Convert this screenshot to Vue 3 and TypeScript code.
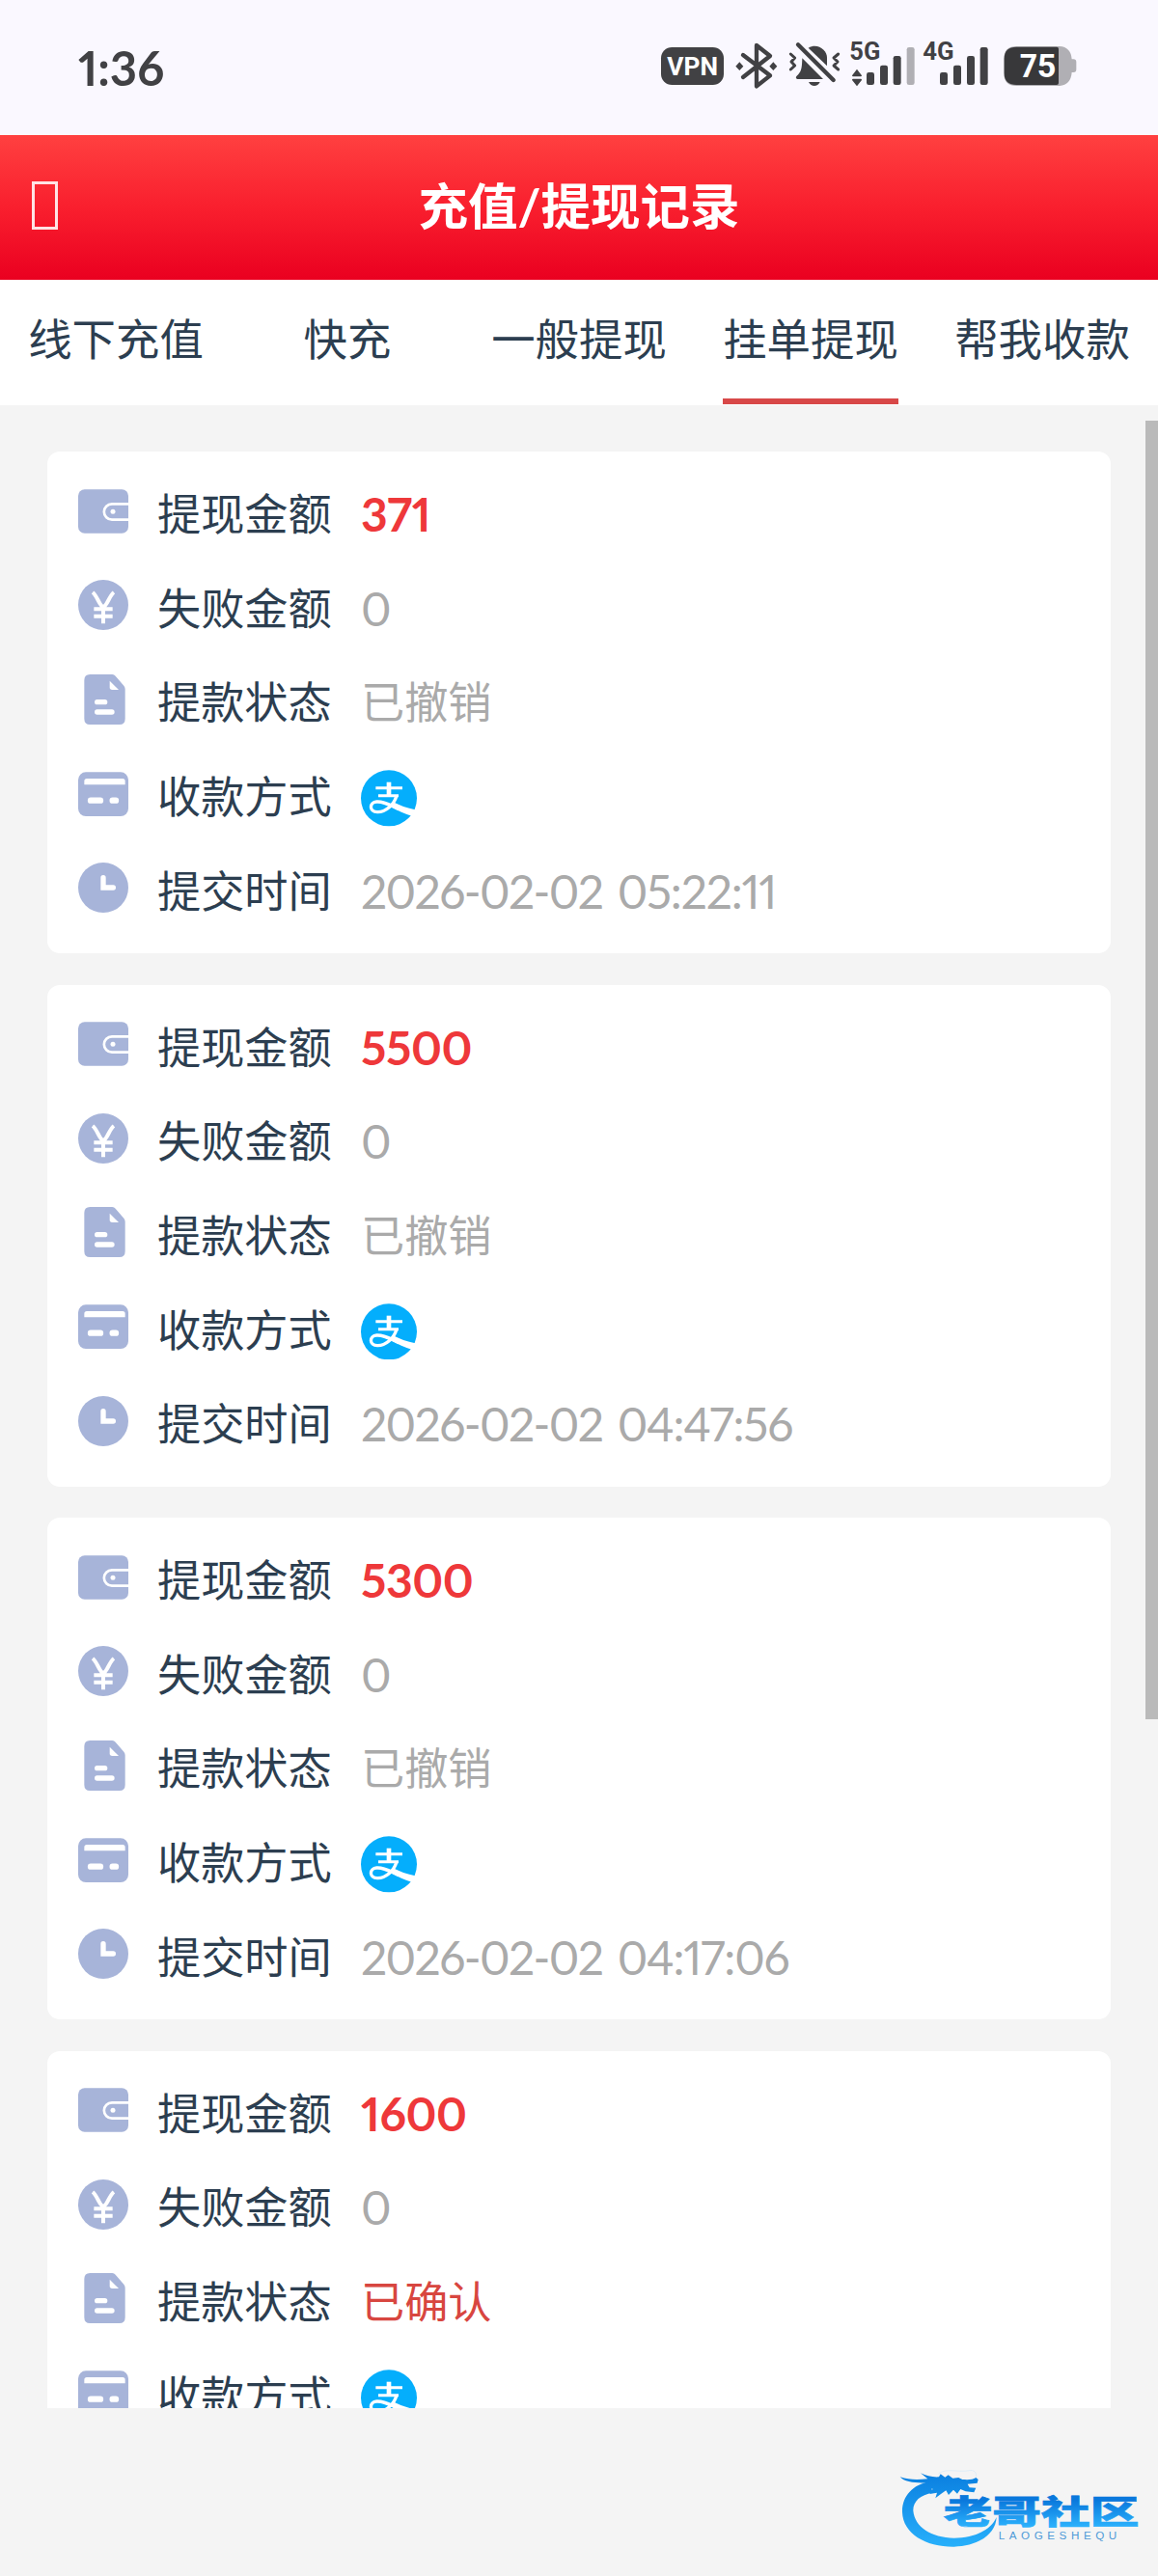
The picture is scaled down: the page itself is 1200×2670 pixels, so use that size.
<script setup lang="ts">
interface WithdrawRecord {
  amount: string
  failed: string
  status: string
  confirmed?: boolean
  date: string
  time: string
}

const tabs: string[] = ['线下充值', '快充', '一般提现', '挂单提现', '帮我收款']
const activeTab = 3

const records: WithdrawRecord[] = [
  { amount: '371', failed: '0', status: '已撤销', date: '2026-02-02', time: '05:22:11' },
  { amount: '5500', failed: '0', status: '已撤销', date: '2026-02-02', time: '04:47:56' },
  { amount: '5300', failed: '0', status: '已撤销', date: '2026-02-02', time: '04:17:06' },
  { amount: '1600', failed: '0', status: '已确认', confirmed: true, date: '', time: '' },
]
</script>

<template>
  <div class="screen">
    <div class="statusbar">
      <span class="clock">1:36</span>
      <svg class="indicators" viewBox="0 0 1440 300" width="480" height="100">
        <g fill="#414144">
          <rect x="75" y="87" width="195" height="117" rx="34" />
          <text x="94" y="174" class="st vpn" textLength="158" lengthAdjust="spacingAndGlyphs">VPN</text>
          <!-- bluetooth -->
          <path d="M330 111 L414 175 L372 208 V81 L414 114 L330 180" fill="none" stroke="#414144" stroke-width="13" stroke-linejoin="round" stroke-linecap="round" />
          <path d="M319 133 l12 13 -12 13 -12 -13z M424 133 l12 13 -12 13 -12 -13z" />
          <!-- muted, vibrating bell -->
          <path d="M533 89 C560 72 591 94 591 119 V145z" />
          <path d="M514 121 L579 186 H499 C490 182 497 176 502 171 C512 160 513 150 514 121z" />
          <path d="M534 195 H569 C562 211 541 211 534 195z" />
          <path d="M501 79 L611 189" fill="none" stroke="#414144" stroke-width="13" stroke-linecap="round" />
          <path d="M478 108 L491 120 L480 132 L491 144 L478 156 M626 108 L612 120 L624 132 L612 144 L626 156" fill="none" stroke="#414144" stroke-width="9" stroke-linejoin="round" stroke-linecap="round" />
          <text x="661" y="126" class="st net" textLength="96" lengthAdjust="spacingAndGlyphs">5G</text>
          <path d="M684 155 L699 175 Q699 178 696 178 H672 Q669 178 669 175z M684 208 L699 189 Q699 185 696 185 H672 Q669 185 669 189z" />
          <rect x="714" y="165" width="24" height="39" rx="7" />
          <rect x="756" y="143" width="24" height="61" rx="7" />
          <rect x="797" y="114" width="24" height="90" rx="7" />
          <rect x="839" y="87" width="24" height="117" rx="7" fill="#b0afb4" />
          <text x="889" y="126" class="st net" textLength="97" lengthAdjust="spacingAndGlyphs">4G</text>
          <rect x="942" y="165" width="24" height="39" rx="7" />
          <rect x="984" y="143" width="24" height="61" rx="7" />
          <rect x="1026" y="114" width="24" height="90" rx="7" />
          <rect x="1067" y="87" width="24" height="117" rx="7" />
          <path d="M1180 84 H1314 Q1349 86 1352 124 H1357 Q1366 124 1366 133 V156 Q1366 165 1357 165 H1352 Q1349 204 1314 207 H1180 Q1141 207 1141 168 V123 Q1141 84 1180 84z" fill="#b0afb4" />
          <path d="M1180 86 H1305 Q1311 86 1311 92 V198 Q1311 204 1305 204 H1180 Q1142 204 1142 168 V123 Q1142 86 1180 86z" fill="#38383a" />
          <text x="1190" y="181" class="st batt" textLength="113" lengthAdjust="spacingAndGlyphs">75</text>
        </g>
      </svg>
    </div>

    <header class="header">
      <span class="back"></span>
      <h1 class="title">充值/提现记录</h1>
    </header>

    <nav class="tabs">
      <div v-for="(tab, i) in tabs" :key="tab" class="tab">
        <span class="tab-label" :class="{ active: i === activeTab }">{{ tab }}</span>
      </div>
    </nav>

    <main class="list">
      <section v-for="(record, n) in records" :key="n" class="card">
        <div class="row">
          <svg class="icon" viewBox="0 0 156 156">
            <rect y="10" width="156" height="136" rx="20" fill="#a7b4d9" />
            <path d="M156 55 H105 A24 24 0 0 0 105 104 H156" fill="none" stroke="#fff" stroke-width="8" />
            <circle cx="108" cy="79" r="7.5" fill="#fff" />
          </svg>
          <span class="label">提现金额</span>
          <span class="value amount">{{ record.amount }}</span>
        </div>
        <div class="row">
          <svg class="icon" viewBox="0 0 156 156">
            <circle cx="78" cy="78" r="78" fill="#a7b4d9" />
            <path d="M45 39 C60 50 66 82 78 84 C90 82 96 50 111 39 M49 91 H107 M49 113 H107 M78 84 V136" fill="none" stroke="#fff" stroke-width="12" />
          </svg>
          <span class="label">失败金额</span>
          <span class="value">{{ record.failed }}</span>
        </div>
        <div class="row">
          <svg class="icon" viewBox="0 0 156 156">
            <path d="M37 0 H106 Q112 0 116 5 L142 35 Q146 40 146 46 V138 Q146 156 128 156 H37 Q19 156 19 138 V18 Q19 0 37 0z" fill="#a7b4d9" />
            <path d="M98 20 L126 48 H106 Q98 48 98 40z" fill="#fff" />
            <path d="M59 86 H83 M59 117 H105" stroke="#fff" stroke-width="16" stroke-linecap="round" />
          </svg>
          <span class="label">提款状态</span>
          <span class="value state" :class="{ confirmed: record.confirmed }">{{ record.status }}</span>
        </div>
        <div class="row">
          <svg class="icon" viewBox="0 0 156 156">
            <rect y="10" width="156" height="137" rx="24" fill="#a7b4d9" />
            <path d="M19 49 V38 Q19 30 27 30 H138 Q146 30 146 38 V49z" fill="#fff" />
            <path d="M39 98 H69 M107 98 H117" stroke="#fff" stroke-width="19" stroke-linecap="round" />
          </svg>
          <span class="label">收款方式</span>
          <svg class="pay" viewBox="0 0 174 176">
            <circle cx="87" cy="88" r="87" fill="#04aefc" />
            <path d="M46 56 H129 M54 80 H117" fill="none" stroke="#fff" stroke-width="9" />
            <path d="M87 38 V80" stroke="#fff" stroke-width="14" />
            <path d="M111 80 C102 110 76 132 51 131 C25 130 25 101 49 99 C74 97 94 112 118 122" fill="none" stroke="#fff" stroke-width="10" />
            <path d="M98 99 C120 110 144 119 169 124 L158 143 C138 137 114 127 92 114z" fill="#fff" />
          </svg>
        </div>
        <div v-if="record.time" class="row">
          <svg class="icon" viewBox="0 0 156 156">
            <circle cx="78" cy="78" r="78" fill="#a7b4d9" />
            <path d="M78 47 V78 H109" fill="none" stroke="#fff" stroke-width="16" stroke-linecap="round" />
          </svg>
          <span class="label">提交时间</span>
          <span class="value"><span class="date">{{ record.date }}</span> <span class="time">{{ record.time }}</span></span>
        </div>
      </section>
      <i class="scrollbar"></i>
    </main>

    <footer class="footer">
      <svg class="logo" viewBox="90 80 760 260" width="253.3" height="86.7">
        <defs>
          <linearGradient id="swoosh" gradientUnits="userSpaceOnUse" x1="0" y1="100" x2="0" y2="328">
            <stop offset="0" stop-color="#0a7fe0" />
            <stop offset="1" stop-color="#28b0fb" />
          </linearGradient>
          <linearGradient id="glyphs" x1="0" y1="0" x2="0" y2="1">
            <stop offset="0.3" stop-color="#0a78dc" />
            <stop offset="0.9" stop-color="#2eb6ff" />
          </linearGradient>
        </defs>
        <path d="M190 126 C138 134 104 172 105 220 C107 288 180 329 266 328 C335 327 396 292 398 236 C380 278 325 301 266 301 C195 300 144 268 139 216 C138 188 160 166 200 160z" fill="url(#swoosh)" />
        <path d="M98 111 C125 120 150 121 184 117 L162 99 C180 108 198 112 219 111 L224 102 L238 112 L248 105 L262 115 L280 113 L292 119 C310 120 325 120 334 113 L341 119 L338 130 L308 133 L314 144 L334 145 L328 159 L302 156 L286 149 L276 163 L264 151 L249 167 L241 153 L224 165 L208 177 L213 160 L190 164 L200 148 L172 142 L184 129 C150 131 112 128 98 111z" fill="url(#swoosh)" />
        <path d="M218 100 C245 82 282 98 312 91 C328 88 337 96 334 112" fill="none" stroke="#d3e8f8" stroke-width="2" />
        <text transform="translate(0 258) scale(1 .69)" x="233" y="0" textLength="608" lengthAdjust="spacingAndGlyphs" class="brand">老哥社区</text>
        <text x="404" y="304" textLength="368" lengthAdjust="spacing" class="brand-en">LAOGESHEQU</text>
      </svg>
    </footer>
  </div>
</template>

<style>
body {
  margin: 0;
  background: #f4f4f4;
}
</style>

<style scoped>
.screen {
  display: flex;
  flex-direction: column;
  width: 1200px;
  height: 2670px;
  overflow: hidden;
  background: #f4f4f4;
  color: #2c3e50;
  font-family: Lato, 'Noto Sans CJK SC', sans-serif;
  font-variant-numeric: proportional-nums;
}

.statusbar {
  display: flex;
  justify-content: space-between;
  box-sizing: border-box;
  height: 140px;
  padding: 20px 60px 0 81px;
  background: #faf8ff;
}

.clock {
  color: #414144;
  font-size: 49px;
  font-weight: 700;
  line-height: 100px;
}

.indicators {
  display: block;
}

.st {
  font-family: Roboto, sans-serif;
  font-weight: 700;
}

.vpn {
  fill: #fff;
  font-size: 80px;
}

.net {
  font-size: 75px;
}

.batt {
  fill: #fff;
  font-size: 102px;
}

.header {
  display: flex;
  align-items: center;
  height: 150px;
  padding: 0 33px;
  background: linear-gradient(#ff4040, #f91f2e 50%, #ea0020);
}

.back {
  box-sizing: border-box;
  width: 27px;
  height: 50px;
  margin-top: -4px;
  border: 3px solid #ffe3e5;
}

.title {
  flex: 1;
  margin: 0 27px 0 0;
  color: #fff;
  font-size: 51.5px;
  font-weight: 700;
  line-height: 146px;
  height: 150px;
  text-align: center;
}

.tabs {
  display: flex;
  height: 130px;
  background: #fff;
}

.tab {
  flex: 1;
  display: flex;
  justify-content: center;
}

.tab-label {
  box-sizing: border-box;
  height: 129px;
  border-bottom: 6px solid transparent;
  font-size: 45.4px;
  line-height: 123px;
  white-space: nowrap;
}

.tab-label.active {
  border-color: #d84848;
}

.list {
  position: relative;
  display: flex;
  flex-direction: column;
  gap: 32.5px;
  box-sizing: border-box;
  height: 2076px;
  padding: 48px 49px 0;
  overflow: hidden;
}

.card {
  flex: none;
  box-sizing: border-box;
  height: 520px;
  padding: 16px 32px;
  border-radius: 13px;
  background: #fff;
}

.row {
  display: flex;
  align-items: center;
  height: 97.6px;
}

.icon {
  width: 52px;
  height: 52px;
  margin: -6px 30px 0 0;
}

.label {
  width: 211px;
  padding-top: 1px;
  font-size: 45.2px;
  line-height: 94px;
}

.value {
  padding-top: 1px;
  color: #aaa;
  font-size: 48px;
  line-height: 94px;
  white-space: nowrap;
}

.date {
  letter-spacing: -1.6px;
}

.time {
  margin-left: 3px;
  letter-spacing: -1.2px;
}

.amount {
  color: #ee383a;
  font-weight: 700;
  letter-spacing: -0.4px;
}

.state {
  font-size: 45.2px;
}

.confirmed {
  color: #d84640;
}

.pay {
  width: 58px;
  height: 58.7px;
  margin-top: 4px;
}

.scrollbar {
  position: absolute;
  top: 16px;
  right: 0;
  width: 13px;
  height: 1346px;
  background: #bababa;
}

.footer {
  display: flex;
  justify-content: flex-end;
  padding: 61px 17px 0 0;
}

.brand {
  fill: url(#glyphs);
  stroke: url(#glyphs);
  stroke-width: 3px;
  font-family: 'Noto Sans CJK SC', sans-serif;
  font-size: 148px;
  font-weight: 900;
}

.brand-en {
  fill: #4f9bd8;
  font-family: 'Liberation Sans', sans-serif;
  font-size: 35px;
}
</style>
